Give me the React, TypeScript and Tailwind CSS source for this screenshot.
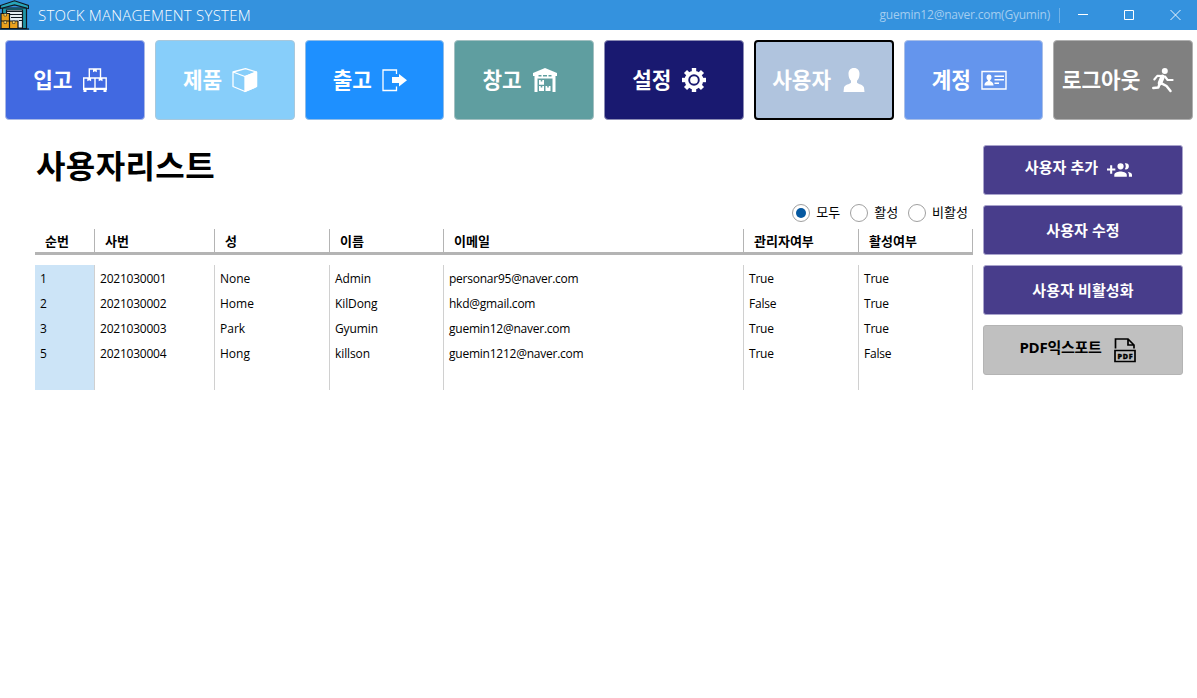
import React from "react";

const svg = "block h-[26px] w-[26px] shrink-0";

const PalletIcon = () => (
  <svg className={svg} viewBox="0 0 26 26" fill="none" stroke="white" strokeWidth="1.4">
    <path d="M7.3 11V2h11.200v9M1.700 21V11h11.300v10M13 11h11.200v10" />
    <path d="M11 2h3.800v3.200l-1.900-1-1.900 1zM5.300 11h3.800v3.200l-1.900-1-1.900 1zM16.700 11h3.800v3.200l-1.900-1-1.900 1z" fill="white" stroke="none" />
    <path d="M1 20.800h24v2.200H1zM1.500 23h3v2h-3zM11.500 23h3v2h-3zM21.500 23h3v2h-3z" fill="white" stroke="none" />
  </svg>
);
const BoxIcon = () => (
  <svg className={svg} viewBox="0 0 26 26" fill="none" stroke="white" strokeWidth="1.300" strokeLinejoin="round">
    <path d="M13.500 1.600 24.500 5v14.500L13 24.500 1 19.500V5z M1 5l12 4.500L24.500 5" />
    <path d="M13 9.500 24.500 5v14.500L13 24.500z" fill="white" />
  </svg>
);
const ExitIcon = () => (
  <svg className={svg} viewBox="0 0 26 26">
    <path d="M14.500 7V3H1v20.500h13.500v-4" fill="none" stroke="white" strokeWidth="1.300" />
    <path d="M10 10h7V7l8 6.300-8 6.200v-3.500h-7z" fill="white" />
  </svg>
);
const WarehouseIcon = () => (
  <svg className={svg} viewBox="0 0 26 26" fill="white">
    <path fillRule="evenodd" d="M13 1 25 6v3h-1.500v16H20.500V11.500H5.500V25h-3V9H1V6zM6.500 8v1.400h3V8zm4.500 0v1.400h4V8zm5.500 0v1.400h3V8z" />
    <path d="M7 13h1.700v1.600h1.600V13H12v4.800H7zM7 19h1.700v1.600h1.600V19H12v5H7zM13.500 19h1.700v1.600h1.600V19h1.700v5h-5z" />
  </svg>
);
const GearIcon = () => (
  <svg className={svg} viewBox="0 0 26 26">
    <g fill="white">
      {[0, 45, 90, 135].map((a) => (
        <path key={a} transform={`rotate(${a} 13 13)`} d="M10.800 1h4.400v24h-4.400z" />
      ))}
      <circle cx="13" cy="13" r="9.300" />
    </g>
    <circle cx="13" cy="13" r="4.800" fill="none" stroke="#191970" strokeWidth="1.900" />
  </svg>
);
const UserIcon = () => (
  <svg className={svg} viewBox="0 0 26 26" fill="white">
    <path d="M13 1c-3.800 0-5.500 2.500-5.500 5.800 0 3.200 1 5.600 2.500 7v2C8.500 17.500 4 17.500 3 20.500L2.500 25h21l-.5-4.500c-1-3-5.500-3-7-4.700v-2c1.500-1.400 2.500-3.800 2.500-7C18.500 3.500 16.800 1 13 1z" />
  </svg>
);
const CardIcon = () => (
  <svg className={svg} viewBox="0 0 26 26">
    <path d="M1 4.500h24v17.500H1z" fill="none" stroke="white" strokeWidth="1.400" />
    <path d="M8 7.500c-1.800 0-2.500 1.200-2.500 2.700 0 1.400.6 2.400 1.400 3v.8C6 14.800 3.500 15 3.500 18v.5h9V18c0-3-2.500-3.200-3.400-4v-.8c.8-.6 1.400-1.600 1.400-3C10.500 8.700 9.800 7.500 8 7.500zM13.500 8.500H23v1.500h-9.500zM13.500 12H23v1.500h-9.500zM13.500 15.500h4.500v1.500h-4.500z" fill="white" />
  </svg>
);
const RunIcon = () => (
  <svg className={svg} viewBox="0 0 26 26" fill="none" stroke="white" strokeLinecap="round" strokeLinejoin="round">
    <circle cx="14.800" cy="4" r="3" fill="white" stroke="none" />
    <path d="M4.300 12.500 7.300 8.800l6 .2M15 9.500l2.600 3.500h5" strokeWidth="2.100" />
    <path d="M12.500 9.800 10 16" strokeWidth="4.600" />
    <path d="M9.500 17l-1.200 3.600-5 .3M11.500 16.300l5 2.700 4 5" strokeWidth="2.500" />
  </svg>
);
const AddUsersIcon = () => (
  <svg className="block h-[25px] w-[25px] shrink-0" viewBox="0 0 24 24" fill="white">
    <path d="M13 13C11 13 7 14 7 16V18H19V16C19 14 15 13 13 13M19.62 13.16C20.45 13.88 21 14.82 21 16V18H24V16C24 14.46 21.63 13.5 19.62 13.16M13 11A3 3 0 0 0 16 8A3 3 0 0 0 13 5A3 3 0 0 0 10 8A3 3 0 0 0 13 11M18 11A3 3 0 0 0 21 8A3 3 0 0 0 18 5C17.68 5 17.37 5.05 17.08 5.14A5 5 0 0 1 18 8C18 8.95 17.72 9.83 17.08 10.86C17.37 10.95 17.68 11 18 11M8 10H5V7H3V10H0V12H3V15H5V12H8V10Z" />
  </svg>
);
const PdfIcon = () => (
  <svg className="block h-[26px] w-[22px] shrink-0" viewBox="0 0 22 26" fill="none" stroke="black" strokeWidth="1.700">
    <path d="M1.500 11.500V2h12.500l6 6v3.500M14 2v6h6M1 13.500h20v11H1z" />
    <text x="3.500" y="21.700" fontSize="7.200" fontWeight="800" fontFamily="Open Sans, sans-serif" fill="black" stroke="black" strokeWidth=".3" textLength="15">PDF</text>
  </svg>
);
const LogoIcon = () => (
  <svg className="block h-[30px] w-[29px] shrink-0" viewBox="0 0 29 30" stroke="#101820" strokeWidth="1.200">
    <path d="M2.500 8h24v20.500h-24z" fill="#2097a8" />
    <path d="M6.500 10h16v18h-16z" fill="#e8eef2" />
    <path d="M7 11.500h16M7 14.500h16M11 17.500h12M19 20.500h4" strokeWidth="1" />
    <path d="M.5 5.500 14.500.8l14 4.700v3l-14-3.700-14 3.700z" fill="#28a5b8" />
    <path d="M1 13.500h8.500V21H1zM1 21h8.500v7.500H1zM9.500 21h8.500v7.500H9.500z" fill="#e9a01c" />
    <path d="M4 13.500h2.500v2.500H4zM4 21h2.500v2.500H4zM12.500 21H15v2.500h-2.500z" fill="#ffd868" strokeWidth=".5" />
    <path d="M0 29h29" />
  </svg>
);

const nav = [
  { label: "입고", bg: "bg-[#4169e1] border-[#a9b8e6]", icon: <PalletIcon /> },
  { label: "제품", bg: "bg-[#87cefa] border-[#a8c8dc]", icon: <BoxIcon /> },
  { label: "출고", bg: "bg-[#1e90ff] border-[#8fbce8]", icon: <ExitIcon /> },
  { label: "창고", bg: "bg-[#5f9ea0] border-[#a3c0c1]", icon: <WarehouseIcon /> },
  { label: "설정", bg: "bg-[#191970] border-[#8c8cb4]", icon: <GearIcon /> },
  { label: "사용자", bg: "bg-[#b0c4de] border-black border-2", icon: <UserIcon /> },
  { label: "계정", bg: "bg-[#6495ed] border-[#a9bfe8]", icon: <CardIcon /> },
  { label: "로그아웃", bg: "bg-[#808080] border-[#b0b0b0]", icon: <RunIcon /> },
];

const columns = [
  { title: "순번", track: "", cells: ["1", "2", "3", "5"] },
  { title: "사번", track: "tracking-[-0.23px]", cells: ["2021030001", "2021030002", "2021030003", "2021030004"] },
  { title: "성", track: "", cells: ["None", "Home", "Park", "Hong"] },
  { title: "이름", track: "tracking-[-0.1px]", cells: ["Admin", "KilDong", "Gyumin", "killson"] },
  { title: "이메일", track: "tracking-[-0.24px]", cells: ["personar95@naver.com", "hkd@gmail.com", "guemin12@naver.com", "guemin1212@naver.com"] },
  { title: "관리자여부", track: "tracking-[-0.2px]", cells: ["True", "False", "True", "True"] },
  { title: "활성여부", track: "tracking-[-0.2px]", cells: ["True", "True", "True", "False"] },
];
const grid = "grid grid-cols-[60px_120px_115px_114px_300px_115px_114px]";

function Radio({ label, checked }: { label: string; checked?: boolean }) {
  return (
    <label className="flex items-center gap-[6px]">
      <span className="flex h-[18px] w-[18px] items-center justify-center rounded-full border border-[#a0a0a0] bg-white">
        {checked && <span className="h-[10px] w-[10px] rounded-full bg-[#0558a0]" />}
      </span>
      <span className="pb-[2px] text-[13px] leading-[18px]">{label}</span>
    </label>
  );
}

const action = "flex h-[50px] items-center justify-center rounded-[3px] border text-[15px] font-bold";

export default function App() {
  return (
    <div className="flex h-[698px] w-[1197px] flex-col overflow-hidden bg-white font-['Open_Sans','Noto_Sans_CJK_KR',sans-serif] text-black">
      <header className="flex h-[30px] shrink-0 items-center bg-[#3492de] text-white">
        <LogoIcon />
        <h1 className="ml-[9px] text-[15px] leading-[30px] font-light tracking-[0.23px] whitespace-nowrap">STOCK MANAGEMENT SYSTEM</h1>
        <span className="ml-auto text-[12px] tracking-[-0.22px] whitespace-nowrap text-[#a3cdf0]">guemin12@naver.com(Gyumin)</span>
        <span className="ml-[9px] h-[15px] w-px bg-[#6fb2e8]" />
        <svg className="h-[30px] w-[137px]" viewBox="0 0 137 30" fill="none" stroke="white">
          <path d="M18 14.500h10M64.500 10.500h9v9h-9z" />
          <path d="m110.500 10 10 10m0-10-10 10" strokeWidth=".9" />
        </svg>
      </header>

      <nav className="grid h-[100px] w-[1198px] shrink-0 grid-cols-8 pt-[10px]">
        {nav.map((n) => (
          <div key={n.label} className="px-[5px]">
            <button className={`flex h-[80px] w-full items-center justify-center gap-[10px] rounded-[4px] border pr-[8px] text-[21.3px] font-bold text-white ${n.bg}`}>
              <span className="shrink-0 leading-[30px] whitespace-nowrap">{n.label}</span>
              {n.icon}
            </button>
          </div>
        ))}
      </nav>

      <div className="flex pl-[35px]">
        <main className="w-[938px]">
          <h2 className="pt-[12px] pl-px text-[32px] leading-[48px] font-bold tracking-[0.4px]">사용자리스트</h2>
          <div className="mt-[13px] flex h-[20px] items-center justify-end gap-[10px] pr-[5px]">
            <Radio label="모두" checked />
            <Radio label="활성" />
            <Radio label="비활성" />
          </div>
          <div className={`${grid} mt-[6px] h-[26px] border-b-[3px] border-[#b4b4b4]`}>
            {columns.map((c) => (
              <div key={c.title} className="border-r border-[#b4b4b4] pl-[10px] text-[13px] leading-[24px] font-bold">{c.title}</div>
            ))}
          </div>
          <div className={`${grid} mt-[10px] h-[125px]`}>
            {columns.map((c, i) => (
              <div key={c.title} className={`border-r border-[#d0d0d0] pt-px pl-[5px] ${i === 0 ? "bg-[#cce4f7]" : ""}`}>
                {c.cells.map((v, r) => (
                  <div key={r} className={`h-[25px] text-[12px] leading-[25px] whitespace-nowrap ${c.track}`}>{v}</div>
                ))}
              </div>
            ))}
          </div>
        </main>

        <aside className="ml-[10px] flex w-[200px] flex-col gap-[10px] pt-[15px]">
          <button className={`${action} gap-[9px] border-[#a9a4cc] bg-[#483d8b] pr-[9px] tracking-[0.1px] text-white`}>
            <span className="-mt-[5px]">사용자 추가</span>
            <AddUsersIcon />
          </button>
          <button className={`${action} border-[#a9a4cc] bg-[#483d8b] tracking-[0.1px] text-white`}>사용자 수정</button>
          <button className={`${action} border-[#a9a4cc] bg-[#483d8b] tracking-[0.1px] text-white`}>사용자 비활성화</button>
          <button className={`${action} gap-[12px] border-[#b4b4b4] bg-[#c0c0c0] pr-[11px]`}>
            <span className="-mt-[5px] tracking-[-0.25px]">PDF익스포트</span>
            <PdfIcon />
          </button>
        </aside>
      </div>
    </div>
  );
}
